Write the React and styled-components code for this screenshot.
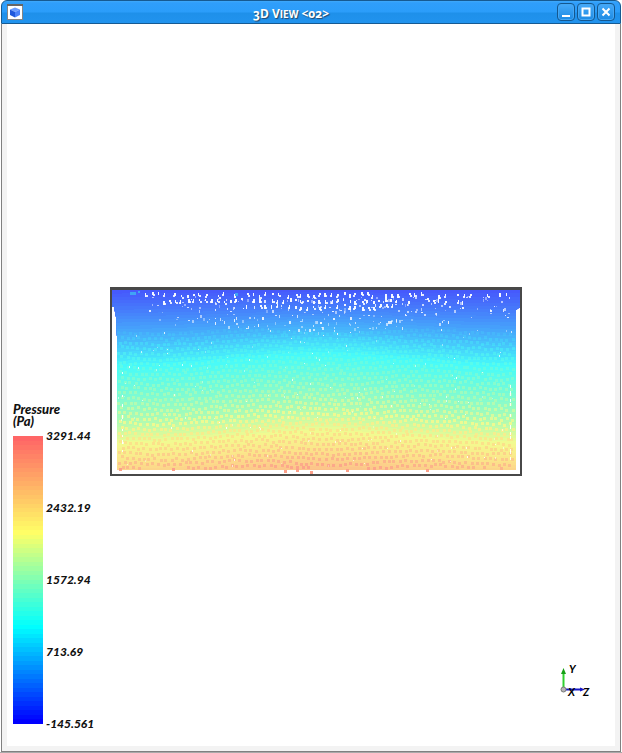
import React from "react";
import styled, { createGlobalStyle } from "styled-components";

const GlobalStyle = createGlobalStyle`
  * { box-sizing: border-box; }
  html, body, #root { height: 100%; }
  body { margin: 0; background: #fff; font-family: "Lato", sans-serif; }
`;

/* ---------- colour scale ---------- */

const mix = (a, b, k) => a.map((v, i) => Math.round(v + (b[i] - v) * k));
const ramp = (stops, t) => {
  const v = Math.min(1, Math.max(0, t));
  const i = Math.max(1, stops.findIndex(([p]) => p >= v));
  const [p0, c0] = stops[i - 1];
  const [p1, c1] = stops[i];
  return `rgb(${mix(c0, c1, (v - p0) / (p1 - p0)).join(",")})`;
};

const scaleStops = [
  [0, [0, 0, 255]],
  [0.335, [0, 255, 255]],
  [0.665, [255, 255, 102]],
  [1, [255, 102, 102]],
];

const fluidStops = [
  [0, [70, 84, 252]],
  [0.12, [70, 128, 251]],
  [0.27, [70, 188, 251]],
  [0.4, [70, 251, 250]],
  [0.55, [118, 251, 215]],
  [0.7, [172, 251, 180]],
  [0.83, [244, 250, 142]],
  [0.93, [252, 226, 138]],
  [1.03, [252, 196, 138]],
  [1.13, [252, 160, 138]],
];

const fluidColour = (t) => ramp(fluidStops.map(([p, c]) => [p / 1.13, c]), t / 1.13);

const STEPS = 64;
const steppedScale = Array.from({ length: STEPS }, (_, i) => {
  const colour = ramp(scaleStops, 1 - i / (STEPS - 1));
  return `${colour} ${(i / STEPS) * 100}% ${((i + 1) / STEPS) * 100}%`;
}).join(", ");

/* ---------- particles ---------- */

const random = (seed) => () => {
  seed = (seed * 1664525 + 1013904223) >>> 0;
  return seed / 4294967296;
};

const sag = (x) => 5 - 12 * Math.exp(-(((x - 212) / 110) ** 2));

const bands = Array.from({ length: 66 }, (_, i) => {
  const y = i * 3;
  const points = [];
  for (let x = 0; x <= 420; x += 12) {
    points.push(`${x} ${(y + sag(x) * Math.min(1, y / 60)).toFixed(1)}`);
  }
  return { d: `M${points.join("L")}L420 220L0 220Z`, fill: fluidColour(y / 182) };
});

const buildDots = () => {
  const rnd = random(11);
  const dots = [];
  for (let row = 0; row < 28; row += 1) {
    for (let col = 0; col < 73; col += 1) {
      const x = 8 + col * 5.5 + (row % 2) * 2.75 + (rnd() - 0.5) * 2;
      const y = 44 + row * 5 + 2 * Math.sin(col / 5) + (rnd() - 0.5) * 2;
      if (x > 403 || y > 180) continue;
      const t = (y - sag(x)) / 182;
      dots.push({
        x: Math.round(x),
        y: Math.round(y),
        fill: fluidColour(t + 0.11),
        opacity: Math.min(0.9, 0.15 + (y - 40) / 80).toFixed(2),
      });
    }
  }
  return dots;
};

const buildFlecks = () => {
  const rnd = random(5);
  const flecks = [];
  const add = (x, y, w, h, opacity) =>
    flecks.push({ x: Math.round(x), y: Math.round(y), w, h, opacity });
  for (let x = 34; x < 404; x += 6) {
    const near = Math.exp(-(((x - 208) / 110) ** 2));
    for (let y = 5; y < 10 + near * 11; y += 6) {
      if (rnd() < 0.5 + near * 0.45) {
        const fx = x + rnd() * 2;
        const fy = y + rnd() * 3;
        add(fx, fy, rnd() < 0.35 + near * 0.4 ? 2 : 1, 2 + Math.floor(rnd() * 3), 0.95);
        if (rnd() < 0.65) add(fx + (rnd() < 0.5 ? 1 : -1), fy + 2, 2, 2, 0.85);
      }
    }
    if (rnd() < 0.3 + near * 0.7) add(x, 2, 3, 1, 0.9);
  }
  for (let i = 0; i < 420; i += 1) {
    const x = 34 + rnd() * 365;
    const near = Math.exp(-(((x - 208) / 130) ** 2));
    const y = 9 + rnd() * (22 + near * 14);
    if (rnd() < 0.25 + near * 0.5) add(x, y, 1 + Math.floor(rnd() * 2), 1 + Math.floor(rnd() * 3), 0.3 + rnd() * 0.6);
  }
  for (let i = 0; i < 170; i += 1) {
    add(8 + rnd() * 395, 36 + rnd() * 142, 1, 1 + Math.floor(rnd() * 2), 0.3 + rnd() * 0.6);
  }
  for (let i = 0; i < 14; i += 1) {
    add(12, 84 + rnd() * 90, 1, 2, 0.9);
    add(400, 90 + rnd() * 84, 1, 3, 0.9);
  }
  return flecks;
};

const dots = buildDots();
const flecks = buildFlecks();
const strays = [[174, 183], [186, 182], [200, 184], [236, 182], [9, 181], [316, 182], [62, 181]];

/* ---------- window ---------- */

const Window = styled.section`
  display: flex;
  flex-direction: column;
  min-height: 100%;
  padding: 0 1px;
  border-bottom: 1px solid #a9a9a9;
`;

const TitleBar = styled.header`
  display: grid;
  grid-template-columns: 44px 1fr 84px;
  align-items: center;
  height: 24px;
  padding: 0 5px;
  border: 1px solid #165a92;
  border-radius: 6px 6px 0 0;
  background: linear-gradient(#3fa9fb 0, #2f9efb 2px, #2b9dfa 11px, #1e90ea 12px, #2193ee 100%);
`;

const Title = styled.h1`
  margin: 0;
  padding-top: 4px;
  color: #fff;
  font: 700 12px/18px "Open Sans", "Lato", sans-serif;
  font-variant-numeric: oldstyle-nums;
  text-align: center;
  text-shadow: 1px 1px 1px #274868;
`;

const SmallCaps = styled.span`
  font-size: 10px;
  text-transform: uppercase;
`;

const Controls = styled.div`
  display: flex;
  justify-content: flex-end;
  gap: 2px;
`;

const ControlButton = styled.button`
  display: grid;
  place-items: center;
  width: 18px;
  height: 18px;
  padding: 0;
  border: 1px solid #14578f;
  border-radius: 4px;
  background: linear-gradient(#46aafa, #1c8ae3);
  box-shadow: inset 0 0 0 1px #44a7f4;
`;

const Frame = styled.main`
  flex: 1;
  display: flex;
  padding: 0 5px 5px;
  border: 1px solid #808080;
  border-width: 0 1px 1px;
  background: #f3f3f3;
`;

const View = styled.div`
  flex: 1;
  display: grid;
  grid-template-columns: 103px 1fr 92px;
  background: #fff;
`;

const Legend = styled.figure`
  align-self: end;
  margin: 0 0 16px 6px;
  color: #111;
  font: italic 900 13px/12px "Lato", sans-serif;
`;

const LegendTitle = styled.figcaption`
  width: 60px;
  margin-bottom: 3px;
`;

const Scale = styled.div`
  display: flex;
  gap: 3px;
  height: 300px;
`;

const ScaleBar = styled.div`
  width: 30px;
  margin: 6px 0;
  background: linear-gradient(${steppedScale});
`;

const ScaleLabels = styled.div`
  display: flex;
  flex-direction: column;
  justify-content: space-between;
  font-size: 12px;
`;

const Plot = styled.svg`
  display: block;
  align-self: center;
  width: 100%;
  height: auto;
  margin-bottom: 6px;
`;

const Axes = styled.svg`
  place-self: end start;
  margin: 0 0 44px 32px;
  font: italic 700 11px "Lato", sans-serif;
`;

function AppIcon() {
  return (
    <svg width="16" height="16" viewBox="0 0 16 16" aria-hidden="true">
      <rect x="0.5" y="0.5" width="15" height="15" fill="#fff" stroke="#858585" />
      <path d="M0 0h16v2H0z" fill="#666" />
      <path d="m8 3.500 5 2-5 2.500-5-2.500z" fill="#6c9dff" />
      <path d="m3 5.500 5 2.500v5.500l-5-2.500z" fill="#1f58dc" />
      <path d="m13 5.500-5 2.500v5.500l5-2.500z" fill="#4b82fa" />
    </svg>
  );
}

const controls = [
  { label: "Minimize", d: "M1 9H9" },
  { label: "Maximize", d: "M1.500 1.500H8.500V8.500H1.500Z" },
  { label: "Close", d: "M1.500 1.500L8.500 8.500M8.500 1.500L1.500 8.500" },
];

function ParticlePlot() {
  return (
    <Plot viewBox="0 0 413 190" role="img" aria-label="Pressure field">
      <defs>
        <clipPath id="fluid">
          <path d="M2 2H410V20L406 23V183H7V50L6 30L4 20H2Z" />
        </clipPath>
      </defs>
      <g clipPath="url(#fluid)" shapeRendering="crispEdges">
        <rect width="413" height="190" fill="#4660fc" />
        {bands.map((band) => (
          <path key={band.d} d={band.d} fill={band.fill} />
        ))}
        {dots.map((dot, i) => (
          <rect key={i} x={dot.x} y={dot.y} width="3" height="3" fill={dot.fill} opacity={dot.opacity} />
        ))}
        {flecks.map((f, i) => (
          <rect key={i} x={f.x} y={f.y} width={f.w} height={f.h} fill="#fff" opacity={f.opacity} />
        ))}
        <path d="M20 5h6v3h-6zM28 4h2v2h-2zM125 6h3v3h-3z" fill="#40a4f5" />
      </g>
      {strays.map(([x, y]) => (
        <rect key={x} x={x} y={y} width="3" height="3" fill="#fba08a" />
      ))}
      <path d="M0 0H412V189H0ZM2 3V187H410V3Z" fill="#484848" fillRule="evenodd" />
    </Plot>
  );
}

export default function App() {
  return (
    <>
      <GlobalStyle />
      <Window>
        <TitleBar>
          <AppIcon />
          <Title>3D V<SmallCaps>iew</SmallCaps> &lt;02&gt;</Title>
          <Controls>
            {controls.map(({ label, d }) => (
              <ControlButton key={label} type="button" aria-label={label}>
                <svg width="10" height="10" viewBox="0 0 10 10">
                  <path d={d} fill="none" stroke="#fff" strokeWidth="2" />
                </svg>
              </ControlButton>
            ))}
          </Controls>
        </TitleBar>
        <Frame>
          <View>
            <Legend>
              <LegendTitle>Pressure (Pa)</LegendTitle>
              <Scale>
                <ScaleBar />
                <ScaleLabels>
                  <span>3291.44</span>
                  <span>2432.19</span>
                  <span>1572.94</span>
                  <span>713.69</span>
                  <span>-145.561</span>
                </ScaleLabels>
              </Scale>
            </Legend>
            <ParticlePlot />
            <Axes width="40" height="40" viewBox="0 0 40 40" role="img" aria-label="Axes">
              <path d="M8.500 28V10" stroke="#2fd02f" strokeWidth="2" />
              <path d="M8.500 6l2.500 6h-5z" fill="#16a016" />
              <path d="M11 27.500h16" stroke="#1818c8" strokeWidth="2" />
              <path d="M30 27.500l-5-2v4z" fill="#1818c8" />
              <circle cx="8.500" cy="27.500" r="2.500" fill="#b5b5b5" stroke="#777" />
              <text x="14" y="11">Y</text>
              <text x="13" y="34">X</text>
              <text x="28" y="34">Z</text>
            </Axes>
          </View>
        </Frame>
      </Window>
    </>
  );
}
